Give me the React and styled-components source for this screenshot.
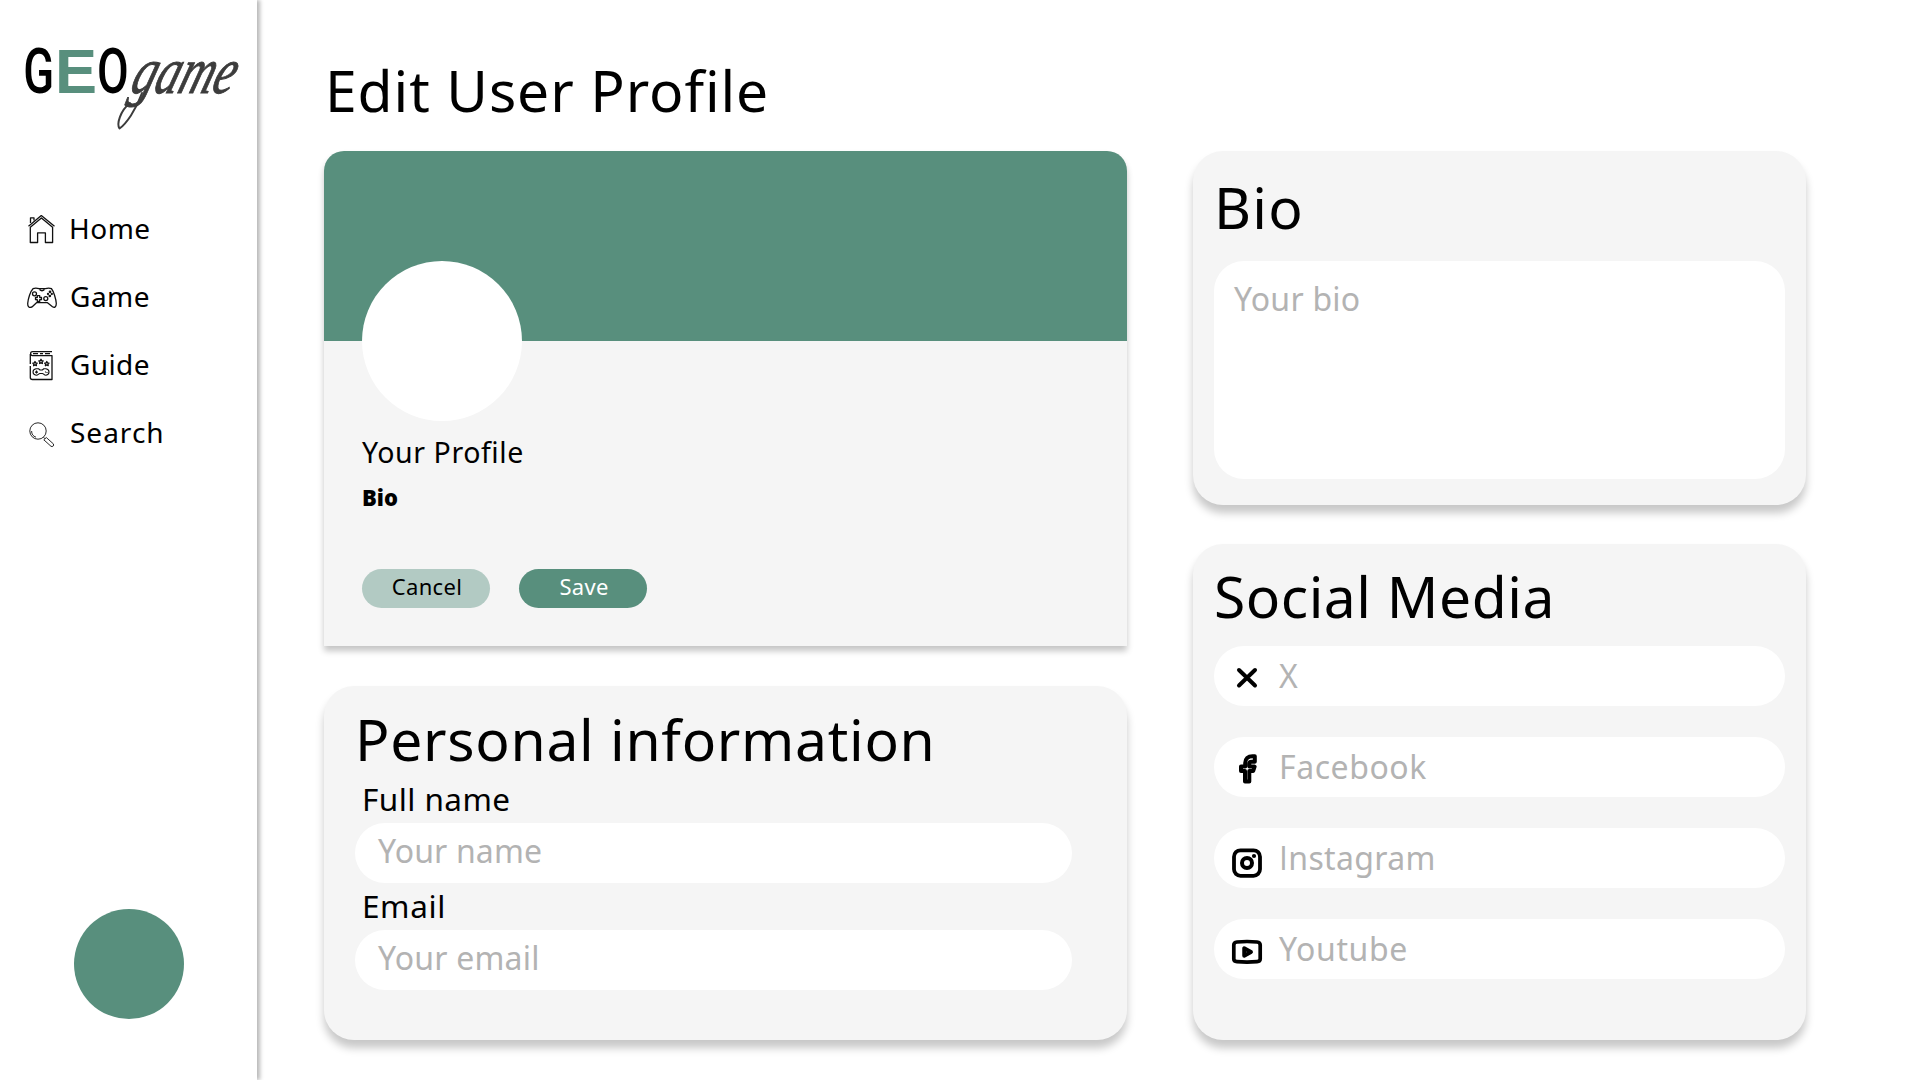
import React from "react";
import styled, { createGlobalStyle } from "styled-components";

const GREEN = "#588f7d";
const PANEL = "#f5f5f5";
const FONT = `"Noto Sans", "Open Sans", sans-serif`;

const GlobalStyle = createGlobalStyle`
  * { box-sizing: border-box; }
  body { margin: 0; background: #fff; font-family: ${FONT}; color: #000; }
  h1, h2, p { margin: 0; font-weight: 400; }
`;

const Page = styled.div`
  display: flex;
  width: 1920px;
  height: 1080px;
  overflow: hidden;
  background: #fff;
`;

const Sidebar = styled.aside`
  display: flex;
  flex-direction: column;
  flex: none;
  width: 257px;
  height: 1080px;
  padding: 36px 0 61px;
  box-shadow: 3px 0 4px rgba(0, 0, 0, 0.28);
`;

const Logo = styled.svg`
  display: block;
  flex: none;
  width: 257px;
  height: 104px;
  overflow: visible;
`;

const Nav = styled.nav`
  display: flex;
  flex-direction: column;
  padding: 56px 0 0 26px;
`;

const NavItem = styled.a`
  display: flex;
  align-items: center;
  height: 68px;
`;

const NavIcon = styled.svg`
  flex: none;
  width: 32px;
  height: 32px;
  margin-right: ${(p) => p.$gap}px;
  fill: none;
  stroke: #111;
  stroke-width: 1.3;
  stroke-linejoin: round;
`;

const NavLabel = styled.span`
  padding-bottom: 4px;
  font-size: 28px;
  line-height: 36px;
  letter-spacing: ${(p) => p.$track}px;
`;

const UserBadge = styled.div`
  width: 110px;
  height: 110px;
  margin: auto 0 0 74px;
  border-radius: 50%;
  background: ${GREEN};
`;

const Main = styled.main`
  display: flex;
  flex-direction: column;
  padding: 53px 0 0 67px;
`;

const PageTitle = styled.h1`
  height: 98px;
  padding-left: 1px;
  font-size: 57px;
  line-height: 75px;
  letter-spacing: 0.9px;
  white-space: nowrap;
`;

const Columns = styled.div`
  display: flex;
  gap: 66px;
`;

const Column = styled.div`
  display: flex;
  flex-direction: column;
  gap: ${(p) => p.$gap}px;
  width: ${(p) => p.$width}px;
`;

const Card = styled.section`
  display: flex;
  flex-direction: column;
  height: ${(p) => p.$height}px;
  padding: ${(p) => p.$padding};
  border-radius: 30px;
  background: ${PANEL};
  box-shadow: 0 8px 9px rgba(0, 0, 0, 0.22);
`;

const ProfileCard = styled(Card)`
  border-radius: 20px 20px 0 0;
  box-shadow: 0 5px 6px rgba(0, 0, 0, 0.23);
`;

const Cover = styled.div`
  height: 190px;
  flex: none;
  border-radius: 20px 20px 0 0;
  background: ${GREEN};
`;

const ProfileBody = styled.div`
  display: flex;
  flex-direction: column;
  padding-left: 38px;
`;

const Avatar = styled.div`
  width: 160px;
  height: 160px;
  margin-top: -80px;
  border-radius: 50%;
  background: #fff;
`;

const ProfileName = styled.p`
  margin-top: 12px;
  font-size: 28.5px;
  line-height: 38px;
  letter-spacing: 0.57px;
`;

const ProfileBio = styled.p`
  margin-top: 11px;
  font-size: 22px;
  font-weight: 900;
  line-height: 30px;
`;

const Actions = styled.div`
  display: flex;
  gap: 29px;
  margin-top: 57px;
`;

const Button = styled.button`
  width: 128px;
  height: 39px;
  padding: 0 0 4px 2px;
  border: 0;
  border-radius: 20px;
  background: ${(p) => (p.$primary ? GREEN : "#b2cac3")};
  color: ${(p) => (p.$primary ? "#fff" : "#000")};
  font: 400 22px/35px ${FONT};
  letter-spacing: 0.3px;
`;

const CardTitle = styled.h2`
  flex: none;
  height: ${(p) => p.$height}px;
  font-size: 57px;
  line-height: 75px;
  letter-spacing: ${(p) => p.$track}px;
  white-space: nowrap;
`;

const Label = styled.label`
  height: 47px;
  padding: 2px 0 0 7px;
  font-size: 31.5px;
  line-height: 42px;
  letter-spacing: ${(p) => p.$track}px;
`;

const Field = styled.div`
  display: flex;
  align-items: ${(p) => (p.$tall ? "flex-start" : "center")};
  flex: none;
  height: ${(p) => (p.$tall ? 218 : 60)}px;
  padding: ${(p) => p.$padding};
  border-radius: 30px;
  background: #fff;
`;

const Placeholder = styled.span`
  color: #b3b3b3;
  font-size: 32px;
  line-height: 42px;
  letter-spacing: ${(p) => p.$track}px;
  white-space: nowrap;
`;

const PlainCapital = styled.span`
  font-family: "Open Sans", sans-serif;
`;

const SocialList = styled.div`
  display: flex;
  flex-direction: column;
  gap: 31px;
`;

const SocialIcon = styled.svg`
  flex: none;
  width: 34px;
  height: 34px;
  margin: ${(p) => p.$shift}px 15px 0 0;
  fill: none;
  stroke: #000;
  stroke-width: 4;
  stroke-linecap: round;
  stroke-linejoin: round;
`;

const HomeIcon = () => (
  <NavIcon $gap={11} viewBox="26 213 32 32">
    <path d="M28.5 225.3 41.3 214.6 54.5 225.3M30.3 226.2V241.5H37.6V231.9H45.4V241.5H52.6V226.2L41.4 217Z" />
    <path d="M30.5 222V216.8H34V219.5" />
  </NavIcon>
);

const GameIcon = () => (
  <NavIcon $gap={12} viewBox="26 283 32 32">
    <path d="M33 289.7C35 288.9 37 289 39 289.7H45.5C47.5 289 49.5 288.9 51.5 289.7C53.5 292 56 300 56.3 304.5C56.3 308 54.5 309 52.5 307.7L47.5 303.7H36.5L32 307.9C29.5 309.2 27.5 308 27.7 304.5C28 300 30.5 292 33 289.7ZM39.5 290.5Q42 293 44.5 290.5" />
    <circle cx="34.5" cy="294.8" r="2" />
    <circle cx="45.8" cy="299.6" r="2" />
    <path d="M37.3 296.7H39.7V298.5H41.5V300.7H39.7V302.5H37.3V300.7H35.5V298.5H37.3Z" />
    <circle cx="50" cy="292.8" r="0.7" />
    <circle cx="48" cy="295" r="0.5" />
    <circle cx="51.8" cy="295" r="0.5" />
    <circle cx="49.8" cy="297" r="0.7" />
  </NavIcon>
);

const STAR = "l.7 1.4 1.5.2-1.1 1.1.3 1.5-1.4-.7-1.4.7.3-1.5-1.1-1.1 1.5-.2z";

const GuideIcon = () => (
  <NavIcon $gap={12} viewBox="26 348 32 32">
    <path d="M52 349.6H32.5C30 349.6 30 353.6 32.5 353.6H52V377.5H32.5C31 377.5 30.3 376.6 30.3 375.5V364M30.3 352V362M33 351.6H38M40 351.6H43M45 351.6H50" />
    <path d={`M35 359.5${STAR}M41 357.3${STAR}M46.8 359.5${STAR}`} />
    <path
      strokeWidth="1.1"
      d="M36 366.8H38.5L40 368H42.3L43.8 366.8H46C50 367.5 50 372.5 46 373.3C44 373.3 43.5 371.5 42.5 371.5H39.8C38.8 371.5 38.2 373.3 36.2 373.3C32 372.5 32 367.5 36 366.8ZM36.5 368.6V371.6M35 370.1H38M45.5 369.5V370.5M47 370V371"
    />
  </NavIcon>
);

const SearchIcon = () => (
  <NavIcon $gap={12} viewBox="26 418 32 32">
    <g strokeWidth="0.9">
      <circle cx="38" cy="431" r="8.2" />
      <path d="M31.6 431A6.5 6.5 0 0 0 36 437.2M43.5 437.2 45.2 438.9M43.8 439.8 46.3 437.5 53.3 443.8C54.5 445.5 52.5 447.3 51 446.3Z" />
    </g>
  </NavIcon>
);

const XIcon = () => (
  <SocialIcon $shift={3} viewBox="1230 661 34 34">
    <path d="M1239 670 1255 685.5M1255 670 1239 685.5" />
  </SocialIcon>
);

const FacebookIcon = () => (
  <SocialIcon $shift={3} viewBox="1230 752 34 34">
    <path
      d="M1254.8 756.2H1252.5C1248 756.2 1245.2 758.8 1245.2 763V766.6H1241V771H1245V781.5H1249.3V771H1253.2L1254.6 766.6H1249.3V763.8C1249.3 762.4 1250 761.7 1251.5 761.7H1254.8Z"
    />
  </SocialIcon>
);

const InstagramIcon = () => (
  <SocialIcon $shift={10} viewBox="1230 846 34 34">
    <rect x="1234" y="850.3" width="26" height="25.5" rx="6.5" strokeWidth="3.8" />
    <circle cx="1247" cy="863" r="5" />
    <circle cx="1254" cy="856" r="2.1" fill="#000" stroke="none" />
  </SocialIcon>
);

const YoutubeIcon = () => (
  <SocialIcon $shift={6} viewBox="1230 935 34 34">
    <path
      strokeWidth="3.7"
      d="M1237 942Q1247 941 1257 942Q1260.2 942.3 1260.2 945V959Q1260.2 961.4 1257 961.7Q1247 962.5 1237 961.7Q1233.8 961.4 1233.8 959V945Q1233.8 942.3 1237 942Z"
    />
    <path d="M1244.2 948.2V955.8L1251 952Z" strokeWidth="3.9" />
  </SocialIcon>
);

const NAV = [
  { label: "Home", track: 0.5, Icon: HomeIcon },
  { label: "Game", track: 0.5, Icon: GameIcon },
  { label: "Guide", track: 0.4, Icon: GuideIcon },
  { label: "Search", track: 1, Icon: SearchIcon },
];

const SOCIAL = [
  { name: "x", label: "X", track: 0, Icon: XIcon },
  { name: "facebook", label: "Facebook", track: 0.55, Icon: FacebookIcon },
  { name: "instagram", label: <><PlainCapital>I</PlainCapital>nstagram</>, track: 0.35, Icon: InstagramIcon },
  { name: "youtube", label: "Youtube", track: 0.6, Icon: YoutubeIcon },
];

export default function App() {
  return (
    <>
      <GlobalStyle />
      <Page>
        <Sidebar>
          <Logo viewBox="0 36 257 104">
            <text transform="translate(23.2 92.8) scale(0.72 1)" fontFamily="Roboto" fontWeight="500" fontSize="63">G</text>
            <text x="55" y="93" fontFamily="Liberation Sans" fontWeight="700" fontSize="63" fill={GREEN}>E</text>
            <text transform="translate(97 92.8) scale(0.73 1)" fontFamily="Roboto" fontWeight="500" fontSize="63">O</text>
            <text
              transform="translate(128.5 93) skewX(-18) scale(0.715 1)"
              fontFamily="Liberation Serif"
              fontStyle="italic"
              fontSize="66"
              fill="#3c3c3c"
              stroke="#3c3c3c"
              strokeWidth="1"
            >
              game
            </text>
            <path
              d="M142 93C136 110 126 124 119.5 128.5C116.5 124 120 111 130 103"
              fill="none"
              stroke="#3c3c3c"
              strokeWidth="2"
              strokeLinecap="round"
              strokeLinejoin="round"
            />
          </Logo>
          <Nav>
            {NAV.map(({ label, track, Icon }) => (
              <NavItem key={label}>
                <Icon />
                <NavLabel $track={track}>{label}</NavLabel>
              </NavItem>
            ))}
          </Nav>
          <UserBadge />
        </Sidebar>
        <Main>
          <PageTitle>Edit User Profile</PageTitle>
          <Columns>
            <Column $width={803} $gap={40}>
              <ProfileCard $height={495} $padding="0">
                <Cover />
                <ProfileBody>
                  <Avatar />
                  <ProfileName>Your Profile</ProfileName>
                  <ProfileBio>Bio</ProfileBio>
                  <Actions>
                    <Button>Cancel</Button>
                    <Button $primary>Save</Button>
                  </Actions>
                </ProfileBody>
              </ProfileCard>
              <Card $height={354} $padding="16px 55px 0 31px">
                <CardTitle $height={74} $track={0.7}>Personal information</CardTitle>
                <Label $track={0.43}>Full name</Label>
                <Field $padding="0 0 4px 23px">
                  <Placeholder $track={0.15}>Your name</Placeholder>
                </Field>
                <Label $track={0.6}>Email</Label>
                <Field $padding="0 0 4px 23px">
                  <Placeholder $track={0.2}>Your email</Placeholder>
                </Field>
              </Card>
            </Column>
            <Column $width={613} $gap={39}>
              <Card $height={354} $padding="19px 21px 0">
                <CardTitle $height={91} $track={1.2}>Bio</CardTitle>
                <Field $tall $padding="17px 20px">
                  <Placeholder $track={0.25}>Your bio</Placeholder>
                </Field>
              </Card>
              <Card $height={496} $padding="15px 21px 0">
                <CardTitle $height={87} $track={0.5}>Social Media</CardTitle>
                <SocialList>
                  {SOCIAL.map(({ name, label, track, Icon }) => (
                    <Field key={name} $padding="0 0 0 16px">
                      <Icon />
                      <Placeholder $track={track}>{label}</Placeholder>
                    </Field>
                  ))}
                </SocialList>
              </Card>
            </Column>
          </Columns>
        </Main>
      </Page>
    </>
  );
}
